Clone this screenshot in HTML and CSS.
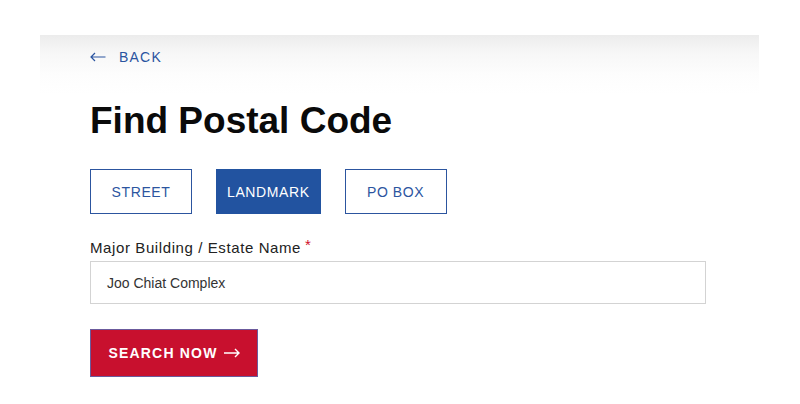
FILE: index.html
```html
<!DOCTYPE html>
<html>
<head>
<meta charset="utf-8">
<link rel="stylesheet" href="styles.css">
</head>
<body>
<div class="page">
  <div class="card">
    <a class="back" href="#"><svg class="back-arrow" width="16" height="10" viewBox="0 0 16 10"><path d="M15.5 5H1M5 1L1 5l4 4" fill="none" stroke="#2a54a0" stroke-width="1.2"/></svg><span>BACK</span></a>
    <h1 class="title">Find Postal Code</h1>
    <div class="tabs">
      <button class="tab">STREET</button>
      <button class="tab tab-active">LANDMARK</button>
      <button class="tab">PO BOX</button>
    </div>
    <label class="label">Major Building / Estate Name<span class="req">*</span></label>
    <div class="input">Joo Chiat Complex</div>
    <button class="search">SEARCH NOW <svg class="search-arrow" width="16" height="10" viewBox="0 0 16 10"><path d="M0 5h14.5M11 1l4 4-4 4" fill="none" stroke="#ffffff" stroke-width="1.4"/></svg></button>
  </div>
</div>
</body>
</html>
```
FILE: styles.css
```css
html, body {
  margin: 0;
  padding: 0;
  background: #ffffff;
}
body {
  font-family: "Liberation Sans", Arial, sans-serif;
  width: 800px;
  height: 404px;
  overflow: hidden;
}
.page {
  padding: 35px 41px 0 40px;
}
.card {
  box-sizing: border-box;
  background: linear-gradient(to bottom, #ececec 0px, #f7f7f7 18px, #fdfdfd 40px, #ffffff 60px);
  padding: 14px 50px 0 50px;
  height: 369px;
  overflow: hidden;
  display: flex;
  flex-direction: column;
  align-items: flex-start;
}
.back {
  display: flex;
  align-items: center;
  gap: 13px;
  color: #2a54a0;
  text-decoration: none;
  font-size: 14px;
  letter-spacing: 1.2px;
  height: 16px;
}
.back-arrow {
  display: block;
}
.title {
  margin: 35px 0 0 0;
  font-size: 37px;
  line-height: 42px;
  font-weight: 700;
  color: #0a0a0a;
  letter-spacing: 0;
}
.tabs {
  display: flex;
  gap: 24px;
  margin-top: 27px;
}
.tab {
  height: 45px;
  background: #ffffff;
  border: 1px solid #2c559f;
  color: #2c559f;
  font-family: "Liberation Sans", Arial, sans-serif;
  font-size: 14px;
  letter-spacing: 0.6px;
  padding: 0 20px;
  min-width: 102px;
}
.tab-active {
  background: #2253a0;
  border-color: #2253a0;
  color: #ffffff;
  min-width: 104px;
  padding: 0 10px;
}
.label {
  margin-top: 25px;
  font-size: 15px;
  color: #222222;
  letter-spacing: 0.6px;
  line-height: 18px;
}
.req {
  color: #d0102a;
  margin-left: 4px;
  position: relative;
  top: -3px;
}
.input {
  margin-top: 4px;
  box-sizing: border-box;
  width: 616px;
  height: 43px;
  border: 1px solid #d3d3d3;
  background: #ffffff;
  padding: 0 16px;
  display: flex;
  align-items: center;
  font-size: 14px;
  color: #333333;
}
.search {
  margin-top: 25px;
  height: 48px;
  box-sizing: border-box;
  width: 168px;
  background: #c8102e;
  border: 1px solid #6b5a9c;
  color: #ffffff;
  font-family: "Liberation Sans", Arial, sans-serif;
  font-weight: 700;
  font-size: 14px;
  letter-spacing: 1.2px;
  display: flex;
  align-items: center;
  justify-content: center;
  gap: 6px;
  padding: 0;
}
.search-arrow {
  display: block;
}
```
